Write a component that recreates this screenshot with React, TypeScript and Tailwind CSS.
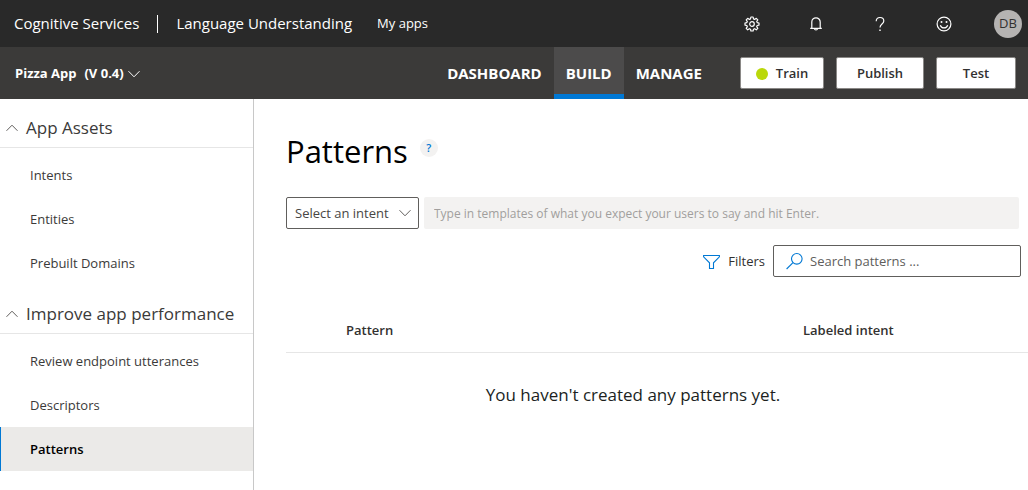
import React from "react";

const assets = ["Intents", "Entities", "Prebuilt Domains"];
const performance = ["Review endpoint utterances", "Descriptors", "Patterns"];

function Chevron({ up = false, className = "" }: { up?: boolean; className?: string }) {
  return (
    <svg viewBox="0 0 12 8" width="12" height="8" fill="none" stroke="currentColor" className={className} aria-hidden="true">
      <path d={up ? "M0.5 6.8 6 1.2l5.5 5.6" : "M0.5 1.2 6 6.8l5.5-5.6"} />
    </svg>
  );
}

function GearIcon() {
  return (
    <svg viewBox="0 0 16 16" width="16" height="16" fill="none" stroke="currentColor" strokeWidth="1.2" strokeLinejoin="round" aria-hidden="true">
      <path d="M6.9 1h2.2l.4 1.9 1.1.5 1.7-1.1 1.5 1.5-1.1 1.7.5 1.1 1.8.4v2.1l-1.8.4-.5 1.1 1.1 1.7-1.5 1.5-1.7-1.1-1.1.5L9.1 15H6.9l-.4-1.8-1.1-.5-1.7 1.1-1.5-1.5 1.1-1.7-.5-1.1L1 9.1V7l1.8-.4.5-1.1-1.1-1.7 1.5-1.5 1.7 1.1 1.1-.5z" />
      <circle cx="8" cy="8" r="2.3" />
    </svg>
  );
}

function BellIcon() {
  return (
    <svg viewBox="0 0 16 16" width="16" height="16" fill="none" stroke="currentColor" strokeWidth="1.2" aria-hidden="true">
      <path d="M2.2 12.4h11.6M3.8 12.4V6a4.2 4.2 0 0 1 8.4 0v6.4M6.5 12.5a1.5 1.5 0 0 0 3 0" />
    </svg>
  );
}

function HelpIcon() {
  return (
    <svg viewBox="0 0 16 16" width="16" height="16" fill="none" stroke="currentColor" strokeWidth="1.2" aria-hidden="true">
      <path d="M4.2 5.2C4.2 2.7 5.8 1.5 8 1.5s3.8 1.3 3.8 3.4c0 3-3.8 3.2-3.8 6.6" />
      <path d="M7.3 13.6h1.4V15H7.3z" fill="currentColor" stroke="none" />
    </svg>
  );
}

function SmileIcon() {
  return (
    <svg viewBox="0 0 16 16" width="16" height="16" fill="none" stroke="currentColor" strokeWidth="1.2" aria-hidden="true">
      <circle cx="8" cy="8" r="6.9" />
      <path d="M4.3 9.3a3.9 3.9 0 0 0 7.4 0" />
      <circle cx="5.5" cy="6" r="1" fill="currentColor" stroke="none" />
      <circle cx="10.5" cy="6" r="1" fill="currentColor" stroke="none" />
    </svg>
  );
}

function FilterIcon() {
  return (
    <svg viewBox="0 0 17 16" width="17" height="16" fill="none" stroke="currentColor" strokeWidth="1.1" aria-hidden="true">
      <path d="M.6 1.5h15.800v1.300l-5.900 6v5.700h-4V8.800L.6 2.800z" />
    </svg>
  );
}

function SearchIcon() {
  return (
    <svg viewBox="0 0 18 18" width="18" height="18" fill="none" stroke="currentColor" strokeWidth="1.1" aria-hidden="true">
      <circle cx="10.8" cy="6.8" r="5.3" />
      <path d="M7 10.6.6 17" />
    </svg>
  );
}

function NavSection({ title, items, current }: { title: string; items: string[]; current?: string }) {
  return (
    <section>
      <h2 className="border-b border-[#e6e6e6]">
        <button type="button" aria-expanded="true" className="flex h-12 w-full items-end gap-2 pb-[7px] pl-1.5 text-left text-[17px] leading-6 text-[#3b3a39]">
          <Chevron up className="mb-2 shrink-0 text-[#605e5c]" />
          {title}
        </button>
      </h2>
      <ul className="pt-[5px]">
        {items.map((item) => (
          <li key={item}>
            <a
              href="#"
              aria-current={item === current ? "page" : undefined}
              className={
                item === current
                  ? "flex h-11 items-center border-l border-[#0078d4] bg-[#ebeae8] pl-[29px] pt-0.5 text-[13px] font-semibold text-black"
                  : "flex h-11 items-center border-l border-transparent pl-[29px] pt-0.5 text-[13px] text-[#3b3a39]"
              }
            >
              {item}
            </a>
          </li>
        ))}
      </ul>
    </section>
  );
}

const iconButton = "flex w-16 justify-center";
const action = "flex h-8 items-center justify-center rounded-xs border border-[#8a8886] bg-white pt-0.5 text-[13px] font-semibold text-[#323130]";

export default function App() {
  return (
    <div className="flex min-h-screen flex-col bg-white font-['Open_Sans',sans-serif] text-[#323130]">
      <header className="flex h-[47px] items-center bg-[#292929] pl-3.5 pr-1.5 text-white">
        <a href="#" className="text-[15px]">Cognitive Services</a>
        <span className="mx-[18px] h-[18px] w-px bg-white" />
        <a href="#" className="text-[15px]">Language Understanding</a>
        <a href="#" className="ml-[25px] text-[13px]">My apps</a>
        <div className="ml-auto flex items-center">
          <button type="button" aria-label="Settings" className={iconButton}><GearIcon /></button>
          <button type="button" aria-label="Notifications" className={iconButton}><BellIcon /></button>
          <button type="button" aria-label="Help" className={iconButton}><HelpIcon /></button>
          <button type="button" aria-label="Feedback" className={iconButton}><SmileIcon /></button>
          <button type="button" className="ml-[18px] size-7 rounded-full bg-[#b5b3b2] text-[13px] text-[#323130]">DB</button>
        </div>
      </header>

      <div className="flex h-[52px] items-center bg-[#3b3a39] pl-[15px] pr-3 text-white">
        <button type="button" className="flex items-center gap-1 pt-0.5 text-[13px] font-bold">
          <span className="mr-1">Pizza App</span>
          <span>(V 0.4)</span>
          <Chevron />
        </button>
        <nav className="ml-auto mr-[26px] flex h-full text-[15px] font-bold">
          <a href="#" className="flex items-center border-b-5 border-transparent px-3 pt-1.5">DASHBOARD</a>
          <a href="#" aria-current="page" className="flex items-center border-b-5 border-[#0078d4] bg-[#4c4b4b] px-3 pt-1.5">BUILD</a>
          <a href="#" className="flex items-center border-b-5 border-transparent px-3 pt-1.5">MANAGE</a>
        </nav>
        <div className="flex gap-3">
          <button type="button" className={`${action} w-21 gap-2`}>
            <span className="size-3 rounded-full bg-[#bad80a]" />
            Train
          </button>
          <button type="button" className={`${action} w-22`}>Publish</button>
          <button type="button" className={`${action} w-20`}>Test</button>
        </div>
      </div>

      <div className="flex flex-1">
        <aside className="w-[254px] shrink-0 border-r border-[#c8c8c8]">
          <NavSection title="App Assets" items={assets} />
          <NavSection title="Improve app performance" items={performance} current="Patterns" />
        </aside>

        <main className="min-w-0 flex-1 pl-8 pt-7">
          <div className="flex h-12 items-center gap-3">
            <h1 className="text-[31px] leading-12 text-black">Patterns</h1>
            <button type="button" aria-label="About patterns" className="mb-1.5 size-[18px] rounded-full bg-[#f3f2f1] text-[11px] font-semibold leading-[18px] text-[#0078d4]">?</button>
          </div>

          <div className="mt-[22px] flex gap-[5px] pr-[9px]">
            <div className="relative">
              <select aria-label="Select an intent" className="h-8 w-[133px] appearance-none rounded-xs border border-[#605e5c] bg-white pl-2 pt-px text-[13px] text-[#484644]">
                <option>Select an intent</option>
              </select>
              <Chevron className="pointer-events-none absolute right-2 top-3 text-[#605e5c]" />
            </div>
            <input
              type="text"
              disabled
              aria-label="Pattern template"
              placeholder="Type in templates of what you expect your users to say and hit Enter."
              className="h-8 min-w-0 flex-1 rounded-xs bg-[#f3f2f1] px-2.5 text-[12px] placeholder:text-[#a19f9d]"
            />
          </div>

          <div className="mt-4 flex justify-end gap-2 pr-[7px]">
            <button type="button" className="flex items-center gap-2 pt-px text-[13px]">
              <span className="text-[#0078d4]"><FilterIcon /></span>
              Filters
            </button>
            <label className="flex h-8 w-62 items-center gap-1.5 rounded-xs border border-[#605e5c] pl-3 text-[#0078d4]">
              <SearchIcon />
              <input type="search" aria-label="Search patterns" placeholder="Search patterns ..." className="min-w-0 flex-1 pt-px text-[13px] outline-none placeholder:text-[#605e5c]" />
            </label>
          </div>

          <table className="mt-[31px] w-full table-fixed text-left">
            <thead className="text-[13px]">
              <tr className="h-11 border-b border-[#e6e6e6]">
                <th scope="col" className="pl-15 pt-0.5 font-semibold">Pattern</th>
                <th scope="col" className="w-[225px] pt-0.5 font-semibold">Labeled intent</th>
              </tr>
            </thead>
            <tbody>
              <tr>
                <td colSpan={2} className="h-21 pr-12 text-center text-[17px] text-[#201f1e]">You haven't created any patterns yet.</td>
              </tr>
            </tbody>
          </table>
        </main>
      </div>
    </div>
  );
}
